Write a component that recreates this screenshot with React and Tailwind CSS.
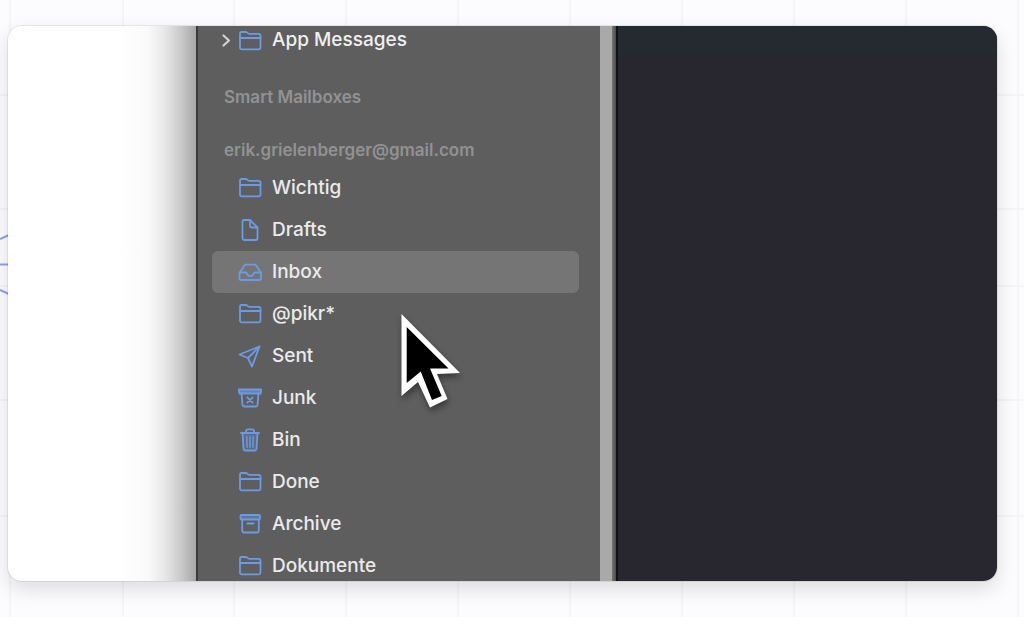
import { useState } from "react";

const FolderIcon = () => (
  <>
    <path d="M2 18.500V4.500a1.500 1.500 0 0 1 1.500-1.500h4.200c.6 0 1 .2 1.500.6l1 .8c.4.3.8.5 1.400.5h9.200A1.700 1.700 0 0 1 22.500 6.600v12.200a1.500 1.500 0 0 1-1.500 1.500H3.700A1.700 1.700 0 0 1 2 18.500Z" />
    <path d="M2 9h20.500" />
  </>
);

const DocIcon = () => (
  <>
    <path d="M6 2h6l7.500 7.500V20a2 2 0 0 1-2 2h-11a2 2 0 0 1-2-2V3.500A1.500 1.500 0 0 1 6 2Z" />
    <path d="M12 2v6a1.500 1.500 0 0 0 1.500 1.500h6" />
  </>
);

const InboxIcon = () => (
  <>
    <path d="M1.500 13 6.300 5.600c.4-.7 1-1 1.800-1h8.300c.8 0 1.400.3 1.800 1L23 13v5.200a1.800 1.800 0 0 1-1.800 1.800H3.300a1.800 1.800 0 0 1-1.800-1.800Z" />
    <path d="M1.500 12.500h6.300c.8 0 1 .5 1.200 1.200.4 1.500 1.700 2.300 3.200 2.300s2.900-.8 3.300-2.300c.2-.7.500-1.200 1.300-1.200H23" />
  </>
);

const SentIcon = () => (
  <>
    <path d="M21.500 2.500 1.500 10.500l8.500 3.500 4 8.500Z" />
    <path d="M21.500 2.500 10 14" />
  </>
);

const JunkIcon = () => (
  <>
    <path d="M.8 3.500h22.400l-.6 4H1.400Z" fill="currentColor" fillOpacity="0.6" />
    <path d="m3.500 7.500 1 11.500c.1 1 .7 1.500 1.600 1.500h11.800c.9 0 1.500-.5 1.600-1.500l1-11.500" />
    <path d="m9.300 11.300 5.400 5.400m0-5.400-5.400 5.400" />
  </>
);

const BinIcon = () => (
  <>
    <path d="M3 5h18M8 5V3.200C8 2 8.700 1.400 9.800 1.400h4.400c1.100 0 1.800.6 1.800 1.800V5" />
    <path
      d="m4.500 5 1 15.500c.1 1.300.9 2 2 2h9c1.100 0 1.900-.7 2-2l1-15.500"
      fill="currentColor"
      fillOpacity="0.2"
    />
    <path d="m8.700 8.500.4 10.500M12 8.500V19m3.300-10.500L14.900 19" strokeOpacity="0.8" />
  </>
);

const ArchiveIcon = () => (
  <>
    <rect x="2.500" y="3" width="19.500" height="4.500" rx="1" fill="currentColor" fillOpacity="0.4" />
    <path d="M4.200 7.500v11a2 2 0 0 0 2 2h12.600a2 2 0 0 0 2-2v-11" />
    <path d="M9.300 11.500h6.400" />
  </>
);

const MAILBOXES = [
  { name: "Wichtig", Icon: FolderIcon },
  { name: "Drafts", Icon: DocIcon },
  { name: "Inbox", Icon: InboxIcon },
  { name: "@pikr*", Icon: FolderIcon },
  { name: "Sent", Icon: SentIcon },
  { name: "Junk", Icon: JunkIcon },
  { name: "Bin", Icon: BinIcon },
  { name: "Done", Icon: FolderIcon },
  { name: "Archive", Icon: ArchiveIcon },
  { name: "Dokumente", Icon: FolderIcon },
];

const MailIcon = ({ children }) => (
  <svg
    viewBox="0 0 24 24"
    className="size-6 shrink-0 text-[#6c9be6]"
    fill="none"
    stroke="currentColor"
    strokeWidth="1.8"
    strokeLinecap="round"
    strokeLinejoin="round"
    aria-hidden="true"
  >
    {children}
  </svg>
);

const SectionTitle = ({ children }) => (
  <h2 className="mt-8 ml-3 h-[21px] text-[17px] leading-[21px] font-semibold text-[#929293]">
    {children}
  </h2>
);

const Sidebar = () => {
  const [selected, setSelected] = useState("Inbox");

  return (
    <nav className="w-[404px] shrink-0 border-l-2 border-[#3a3a3b] bg-[#5e5e5f] pr-[21px] pl-3.5">
      <button type="button" className="flex h-[29px] w-full items-center pl-2 text-left">
        <svg
          viewBox="0 0 12 16"
          className="mr-1.5 h-4 w-3 text-[#d2d2d2]"
          fill="none"
          stroke="currentColor"
          strokeWidth="2.2"
          strokeLinecap="round"
          strokeLinejoin="round"
          aria-hidden="true"
        >
          <path d="m3.500 2.500 5.500 5-5.500 5" />
        </svg>
        <MailIcon>
          <FolderIcon />
        </MailIcon>
        <span className="ml-2.5 text-[19px] font-medium text-[#f0f0f0]">App Messages</span>
      </button>

      <SectionTitle>Smart Mailboxes</SectionTitle>
      <SectionTitle>erik.grielenberger@gmail.com</SectionTitle>

      <ul className="mt-1.5">
        {MAILBOXES.map(({ name, Icon }) => (
          <li key={name}>
            <button
              type="button"
              onClick={() => setSelected(name)}
              className={`flex h-[42px] w-full items-center rounded-md pl-[26px] text-left ${
                selected === name ? "bg-[#757576]" : ""
              }`}
            >
              <MailIcon>
                <Icon />
              </MailIcon>
              <span className="ml-2.5 text-[19px] font-medium text-[#ebebeb]">{name}</span>
            </button>
          </li>
        ))}
      </ul>
    </nav>
  );
};

const VERTICAL_LINES = [10, 123, 234, 346, 458, 570, 682, 794, 906, 1018];
const HORIZONTAL_LINES = [95, 209, 286, 400, 516];

const Backdrop = () => (
  <svg className="absolute inset-0 size-full" aria-hidden="true">
    <g stroke="#f5f5f7" strokeWidth="2">
      {VERTICAL_LINES.map((x) => (
        <line key={x} x1={x} x2={x} y1="0" y2="100%" />
      ))}
      {HORIZONTAL_LINES.map((y) => (
        <line key={y} x1="0" x2="100%" y1={y} y2={y} />
      ))}
    </g>
    <path d="M0 239 10 234.500M0 264.500h10M0 290l10 4.500" stroke="#8aa0f5" strokeWidth="2" />
  </svg>
);

const Cursor = () => (
  <svg
    viewBox="0 0 64 100"
    className="absolute top-[286px] left-[390px] h-[100px] w-16 drop-shadow-[1px_4px_3px_rgba(0,0,0,0.4)]"
    aria-hidden="true"
  >
    <path d="M3.500 2v82L20 70l12 25.500 17.500-8.500L39 62l23-1Z" fill="#fff" />
    <path d="M8.700 15v56l14-11.500L34 88l9.700-4L32 56.500h18.500Z" fill="#000" />
  </svg>
);

export default function App() {
  return (
    <main className="relative flex h-screen bg-[#fcfcfe] pt-[26px] pr-[27px] pb-9 pl-2 font-[Inter,sans-serif]">
      <Backdrop />
      <section className="relative flex min-w-0 flex-1 overflow-hidden rounded-[14px] bg-white shadow-[0_0_0_1px_rgba(0,0,0,0.07),0_8px_20px_rgba(0,0,0,0.13)]">
        <div className="flex w-[188px] shrink-0 justify-end">
          <div className="w-20 bg-[linear-gradient(to_right,#fff,#fafafa_40%,#e6e6e6_62%,#c8c8c8_82%,#a6a6a6)]" />
        </div>
        <Sidebar />
        <div className="w-3 shrink-0 bg-[#a9a9aa]" />
        <div className="w-1 shrink-0 bg-linear-to-r from-[#747675] to-[#4a4c4c]" />
        <div className="flex min-w-0 flex-1 flex-col border-l-2 border-[#111214] bg-[#282730]">
          <div className="h-7 bg-[#252a31]" />
        </div>
        <Cursor />
      </section>
    </main>
  );
}
